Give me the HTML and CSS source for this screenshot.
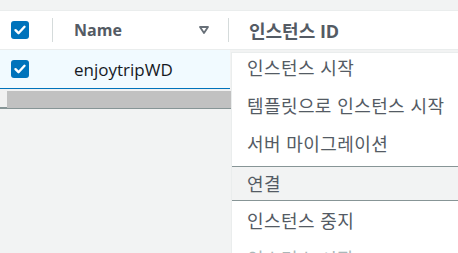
FILE: index.html
```html
<!DOCTYPE html>
<html lang="ko">
<head>
  <meta charset="UTF-8" />
  <title>인스턴스</title>
  <link rel="stylesheet" href="styles.css">
</head>
<body>
  <!-- 상단 여백 -->
  <div class="top-strip"></div>

  <!-- 테이블 -->
  <div class="table">
    <div class="row head">
      <div class="cell check-cell">
        <span class="checkbox"><svg viewBox="0 0 18 18" width="18" height="18"><path d="M4.5 9.2l3 3 6-6.4" fill="none" stroke="#fff" stroke-width="2.4" stroke-linecap="round" stroke-linejoin="round"/></svg></span>
      </div>
      <div class="cell name-cell">
        <span>Name</span>
        <svg class="sort" viewBox="0 0 10 8" width="10" height="8"><path d="M1 1h8L5 7z" fill="none" stroke="#687078" stroke-width="1.8" stroke-linejoin="round"/></svg>
      </div>
      <div class="cell id-cell">인스턴스 ID</div>
    </div>

    <div class="row selected">
      <div class="cell check-cell">
        <span class="checkbox"><svg viewBox="0 0 18 18" width="18" height="18"><path d="M4.5 9.2l3 3 6-6.4" fill="none" stroke="#fff" stroke-width="2.4" stroke-linecap="round" stroke-linejoin="round"/></svg></span>
      </div>
      <div class="cell name-cell">enjoytripWD</div>
    </div>

    <div class="scrollbar">
      <div class="thumb"></div>
    </div>
  </div>

  <!-- 작업 메뉴 -->
  <ul class="menu">
    <li>인스턴스 시작</li>
    <li>템플릿으로 인스턴스 시작</li>
    <li>서버 마이그레이션</li>
    <li class="active">연결</li>
    <li>인스턴스 중지</li>
    <li class="disabled">인스턴스 시작</li>
  </ul>
</body>
</html>
```

FILE: styles.css
```css
body {
  margin: 0;
  background: #f2f3f3;
  font-family: 'Open Sans', 'Noto Sans CJK KR', sans-serif;
  color: #16191f;
  overflow: hidden;
}

.top-strip {
  height: 10px;
  border-bottom: 1px solid #eaeded;
}

.table {
  width: 231px;
}

.row {
  display: flex;
  align-items: center;
  width: 458px;
}

.row.head {
  height: 38px;
  background: #fff;
  border-bottom: 1px solid #eaeded;
  color: #545b64;
  font-weight: bold;
  font-size: 16px;
}

.row.selected {
  height: 38px;
  background: #f1faff;
  border-bottom: 1px solid #0073bb;
  width: 230px;
  font-size: 17px;
}

.cell {
  display: flex;
  align-items: center;
  height: 24px;
}

.check-cell {
  width: 53px;
  padding-left: 11px;
  box-sizing: border-box;
}

.head .check-cell,
.head .name-cell {
  border-right: 1px solid #d5dbdb;
}

.checkbox {
  width: 18px;
  height: 18px;
  border-radius: 3px;
  background: #0073bb;
  display: flex;
}

.name-cell {
  width: 176px;
  padding-left: 21px;
  padding-right: 19px;
  box-sizing: border-box;
  justify-content: space-between;
}

.id-cell {
  padding-left: 20px;
  font-size: 18px;
}

.scrollbar {
  height: 20px;
  background: #f1f1f1;
  padding: 2px 0 0 7px;
  box-sizing: border-box;
  border-bottom: 2px solid #879596;
}

.thumb {
  height: 17px;
  background: #c1c1c1;
}

.menu {
  position: absolute;
  top: 52px;
  left: 231px;
  right: 0;
  bottom: 0;
  margin: 0;
  padding: 0;
  list-style: none;
  background: #fff;
  border-top: 1px solid #eaeded;
  border-left: 1px solid #eaeded;
  font-family: 'Noto Sans CJK KR', sans-serif;
  font-size: 18px;
  letter-spacing: 0.4px;
  color: #545b64;
  overflow: hidden;
}

.menu li {
  padding: 9px 15px 8px;
  line-height: 21px;
  white-space: nowrap;
}

.menu li:first-child {
  padding-top: 4px;
}

.menu li.active {
  background: #f2f3f3;
  border: 1px solid #879596;
  border-right: none;
  margin: 4px 0 0 -1px;
  padding: 6px 16px 6px 15px;
}

.menu li.disabled {
  color: #aab7b8;
}
```
